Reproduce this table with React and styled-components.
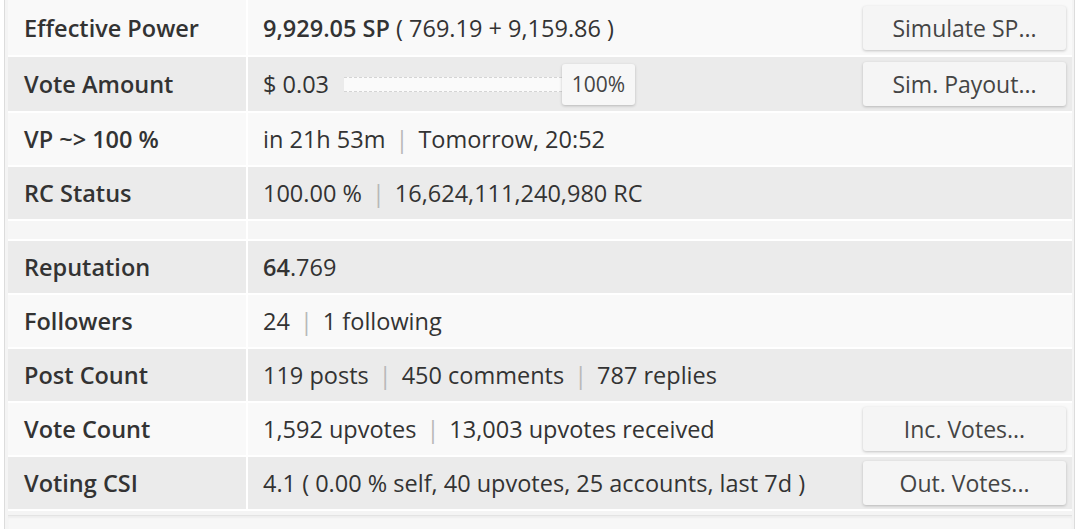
import React from "react";
import styled, { createGlobalStyle } from "styled-components";

const Global = createGlobalStyle`
  html, body { margin: 0; padding: 0; background: #ffffff; }
  body { font-family: "Open Sans", "Noto Sans", sans-serif; color: #333; }
`;

const Page = styled.div`
  width: 1080px;
  height: 529px;
  overflow: hidden;
  padding-left: 4px;
  padding-right: 5px;
  box-sizing: border-box;
`;

const Panel = styled.div`
  border-left: 1px solid #dcdcdc;
  border-right: 1px solid #dcdcdc;
  background: #f4f4f4;
  padding: 0 2px 0 3px;
  height: 100%;
  display: flex;
  flex-direction: column;
  gap: 4px;
`;

const Table = styled.div`
  display: grid;
  grid-template-columns: 238px 1fr;
  column-gap: 2px;
  row-gap: 2px;
  background: #ffffff;
  padding-bottom: 2px;
`;

const Cell = styled.div`
  height: ${(p) => p.$h || 52}px;
  background: ${(p) => (p.$shade ? "#ebebeb" : "#f9f9f9")};
  display: flex;
  align-items: center;
  box-sizing: border-box;
  font-size: 23.5px;
  color: #333;
  white-space: nowrap;
`;

const Label = styled(Cell)`
  padding-left: 16px;
  font-weight: 600;
`;

const Value = styled(Cell)`
  padding-left: 15px;
  padding-right: 6px;
  font-weight: 400;
`;

const Spacer = styled.div`
  height: 18px;
  background: #f6f6f6;
`;

const Strong = styled.span`
  font-weight: 600;
`;

const Pipe = styled.span`
  color: #b8b8b8;
  margin: 0 10px;
`;

const Grow = styled.span`
  flex: 1;
  display: flex;
  align-items: center;
  white-space: pre;
`;

const ActionButton = styled.button`
  width: 203px;
  height: 44px;
  border: none;
  border-radius: 3px;
  background: #f5f5f5;
  box-shadow: 0 1px 3px rgba(0, 0, 0, 0.22);
  font-family: "Open Sans", "Noto Sans", sans-serif;
  font-size: 23px;
  color: #444;
  padding: 0;
  flex-shrink: 0;
`;

const Slider = styled.div`
  display: flex;
  align-items: center;
  margin-left: 15px;
`;

const Track = styled.div`
  width: 218px;
  height: 13px;
  background: #fafafa;
  border-top: 1px dashed #d4d4d4;
  border-bottom: 1px dashed #d4d4d4;
`;

const Handle = styled.div`
  width: 73px;
  height: 41px;
  border-radius: 3px;
  background: #f7f7f7;
  box-shadow: 0 1px 3px rgba(0, 0, 0, 0.22);
  display: flex;
  align-items: center;
  justify-content: center;
  font-size: 21px;
  color: #444;
`;

const Footer = styled.div`
  flex: 1;
  background: #f7f7f7;
  border-top: 1px solid #e3e3e3;
  box-shadow: inset 0 2px 2px rgba(0, 0, 0, 0.04);
`;

const Sep = () => <Pipe>|</Pipe>;

export default function App() {
  return (
    <>
      <Global />
      <Page>
        <Panel>
          <Table>
            <Label $h={55}>Effective Power</Label>
            <Value $h={55}>
              <Grow>
                <Strong>9,929.05 SP</Strong> ( 769.19 + 9,159.86 )
              </Grow>
              <ActionButton>Simulate SP...</ActionButton>
            </Value>

            <Label $h={54} $shade>Vote Amount</Label>
            <Value $h={54} $shade>
              <Grow>
                $ 0.03
                <Slider>
                  <Track />
                  <Handle>100%</Handle>
                </Slider>
              </Grow>
              <ActionButton>Sim. Payout...</ActionButton>
            </Value>

            <Label>VP ~&gt; 100 %</Label>
            <Value>
              in 21h 53m<Sep />Tomorrow, 20:52
            </Value>

            <Label $shade>RC Status</Label>
            <Value $shade>
              100.00 %<Sep />16,624,111,240,980 RC
            </Value>

            <Spacer />
            <Spacer />

            <Label $shade>Reputation</Label>
            <Value $shade>
              <Strong>64</Strong>.769
            </Value>

            <Label>Followers</Label>
            <Value>
              24<Sep />1 following
            </Value>

            <Label $shade>Post Count</Label>
            <Value $shade>
              119 posts<Sep />450 comments<Sep />787 replies
            </Value>

            <Label>Vote Count</Label>
            <Value>
              <Grow>
                1,592 upvotes<Sep />13,003 upvotes received
              </Grow>
              <ActionButton>Inc. Votes...</ActionButton>
            </Value>

            <Label $shade>Voting CSI</Label>
            <Value $shade>
              <Grow>4.1 ( 0.00 % self, 40 upvotes, 25 accounts, last 7d )</Grow>
              <ActionButton>Out. Votes...</ActionButton>
            </Value>
          </Table>
          <Footer />
        </Panel>
      </Page>
    </>
  );
}
